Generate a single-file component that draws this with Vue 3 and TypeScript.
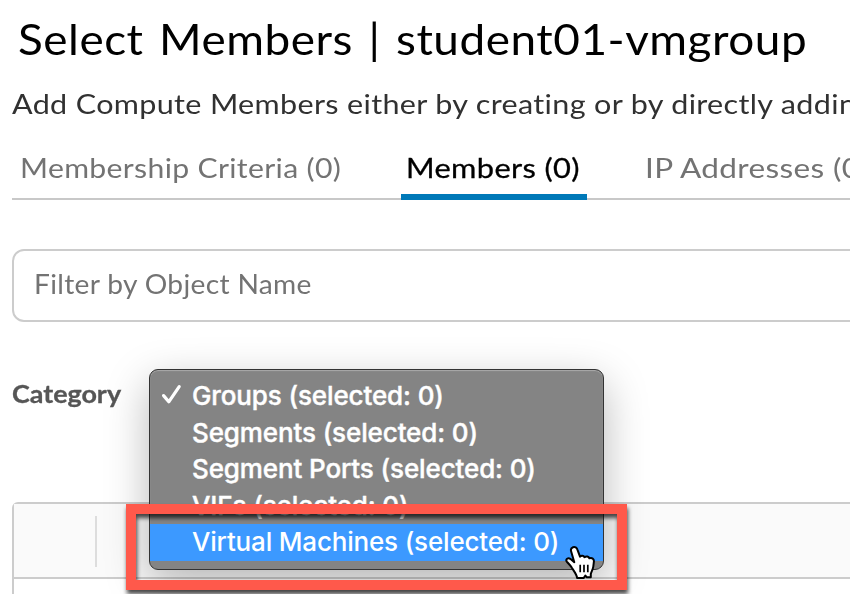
<script setup lang="ts">
interface Tab {
  id: string
  label: string
  active: boolean
}

interface Category {
  id: string
  label: string
  checked: boolean
  hovered: boolean
}

const tabs: Tab[] = [
  { id: 'criteria', label: 'Membership Criteria (0)', active: false },
  { id: 'members', label: 'Members (0)', active: true },
  { id: 'ip', label: 'IP Addresses (0)', active: false },
]

const categories: Category[] = [
  { id: 'groups', label: 'Groups (selected: 0)', checked: true, hovered: false },
  { id: 'segments', label: 'Segments (selected: 0)', checked: false, hovered: false },
  { id: 'ports', label: 'Segment Ports (selected: 0)', checked: false, hovered: false },
  { id: 'vifs', label: 'VIFs (selected: 0)', checked: false, hovered: false },
  { id: 'vms', label: 'Virtual Machines (selected: 0)', checked: false, hovered: true },
]
</script>

<template>
  <main class="page">
    <h1 class="title"><span class="wide">Select Members | student01-vmgroup</span></h1>
    <p class="intro"><span class="wide">Add Compute Members either by creating or by directly adding</span></p>

    <nav class="tabs">
      <a v-for="tab in tabs" :key="tab.id" class="tab" :class="[tab.id, { active: tab.active }]">
        <span class="wide">{{ tab.label }}</span>
      </a>
    </nav>

    <div class="filter"><span class="placeholder wide">Filter by Object Name</span></div>

    <div class="category">
      <span class="category-label"><span class="wide">Category</span></span>
      <div class="select">
        <ul class="menu">
          <li v-for="item in categories" :key="item.id" class="option" :class="[item.id, { hovered: item.hovered }]">
            <span class="mark">
              <svg v-if="item.checked" width="22" height="24" viewBox="0 0 22 24">
                <path d="M2.6 13.6 7.8 19.8 18.2 4.6" fill="none" stroke="#fff" stroke-width="3.2" stroke-linecap="round" stroke-linejoin="round" />
              </svg>
            </span>
            <span class="option-label">{{ item.label }}</span>
          </li>
        </ul>
      </div>
    </div>

    <section class="grid">
      <header class="grid-head"><i class="divider"></i></header>
    </section>

    <div class="callout"></div>
    <svg class="cursor" width="34" height="36" viewBox="0 0 34 36">
      <path
        d="M8 2.2C10 1.4 11.8 2.6 12.5 4.8L15 11.7C16 10.3 18.6 10.3 19.5 12.2C21.2 10.8 23.7 11.4 24.4 13.3C27 12.4 29.2 13.8 28.9 16.6L28.3 21.5C27.9 24.6 26.3 26.4 25.8 29V32.3H21.9L20.4 30.6L18.8 32.9H12.1C11.8 29.2 8.8 26.2 6.7 22.6C5.4 20.2 3.2 18.5 1.8 16.6C0.3 14.4 3 12.3 5.3 13.8L9.3 17.2L6.1 6.2C5.5 4.2 6.2 2.9 8 2.2Z"
        fill="#fff" stroke="#000" stroke-width="2" stroke-linejoin="round"
      />
      <path d="M15.2 19.8V27.2M19 19.8V27.2M22.8 19.8V27.2" stroke="#000" stroke-width="1.7" />
    </svg>
  </main>
</template>

<style>
body {
  background: #fff;
}
</style>

<style scoped>
.page {
  position: relative;
  box-sizing: border-box;
  width: 850px;
  height: 594px;
  padding-left: 12px;
  overflow: hidden;
  font-family: Lato, "Open Sans", sans-serif;
  white-space: nowrap;
}

.wide {
  display: inline-block;
  transform-origin: 0 50%;
}

.title {
  margin: 0;
  padding: 9px 0 0 6px;
  font-size: 43px;
  font-weight: 400;
  line-height: 60px;
  letter-spacing: 0.5px;
  word-spacing: 3px;
  color: #000;
}

.title .wide {
  transform: scaleX(1.067);
}

.intro {
  margin: 0;
  padding-top: 15px;
  font-size: 27px;
  line-height: 40px;
  letter-spacing: 0.3px;
  color: #313131;
}

.intro .wide {
  transform: scaleX(1.131);
}

.tabs {
  display: flex;
  height: 76px;
  box-sizing: border-box;
  border-bottom: 2px solid #c8c8c8;
}

.tab {
  box-sizing: border-box;
  height: 76px;
  padding: 24px 0 0 8px;
  font-size: 27px;
  line-height: 40px;
  letter-spacing: 0.3px;
  color: #737373;
}

.tab.criteria {
  width: 389px;
}

.tab.criteria .wide {
  transform: scaleX(1.118);
}

.tab.members {
  width: 186px;
  margin-right: 50px;
  padding-left: 5px;
}

.tab.members .wide {
  transform: scaleX(1.142);
}

.tab.ip .wide {
  transform: scaleX(1.168);
}

.tab.active {
  color: #000;
  border-bottom: 6px solid #0079b8;
  -webkit-text-stroke: 0.3px #000;
}

.filter {
  box-sizing: border-box;
  width: 900px;
  height: 73px;
  margin-top: 49px;
  padding: 12px 0 0 20px;
  border: 2px solid #ccc;
  border-radius: 12px;
}

.placeholder {
  font-size: 26px;
  line-height: 42px;
  letter-spacing: 0.3px;
  color: #737373;
  transform: scaleX(1.083);
}

.category {
  display: flex;
  height: 180px;
}

.category-label {
  box-sizing: border-box;
  width: 137px;
  padding-top: 52px;
  font-size: 24px;
  font-weight: 700;
  line-height: 40px;
  color: #565656;
  -webkit-text-stroke: 0.3px #565656;
}

.category-label .wide {
  transform: scaleX(1.12);
}

.select {
  position: relative;
}

.menu {
  position: absolute;
  z-index: 1;
  top: 47px;
  left: 0;
  box-sizing: border-box;
  width: 455px;
  height: 201px;
  margin: 0;
  padding: 8px 0 0;
  overflow: hidden;
  list-style: none;
  background: #848484;
  border: 1px solid #333;
  border-radius: 9px;
  box-shadow: 0 14px 44px rgba(0, 0, 0, 0.28), inset 0 1px 1px #aaa;
}

.option {
  display: flex;
  height: 36.5px;
  font-family: Inter, "Liberation Sans", sans-serif;
  font-size: 26px;
  font-weight: 500;
  line-height: 35px;
  letter-spacing: -0.12px;
  color: #fff;
  -webkit-text-stroke: 0.4px #fff;
}

.option.hovered {
  background: #3c99ff;
  letter-spacing: -0.18px;
  -webkit-text-stroke: 0;
}

.mark {
  width: 42px;
  padding: 4px 0 0 11px;
  box-sizing: border-box;
  line-height: 0;
}

.grid {
  box-sizing: border-box;
  width: 900px;
  height: 120px;
  border: 2px solid #ccc;
  border-radius: 6px;
}

.grid-head {
  display: flex;
  height: 73px;
  padding: 12px 0 0 81px;
  box-sizing: border-box;
  background: #fafafa;
  box-shadow: 0 2px #ccc;
}

.divider {
  width: 2px;
  height: 51px;
  background: #ddd;
}

.callout {
  position: absolute;
  z-index: 2;
  top: 504px;
  left: 126px;
  box-sizing: border-box;
  width: 501px;
  height: 86px;
  border: 10px solid #ff594b;
  filter: drop-shadow(1px 4px 2px rgba(0, 0, 0, 0.7));
}

.cursor {
  position: absolute;
  z-index: 3;
  top: 545px;
  left: 565px;
}
</style>
